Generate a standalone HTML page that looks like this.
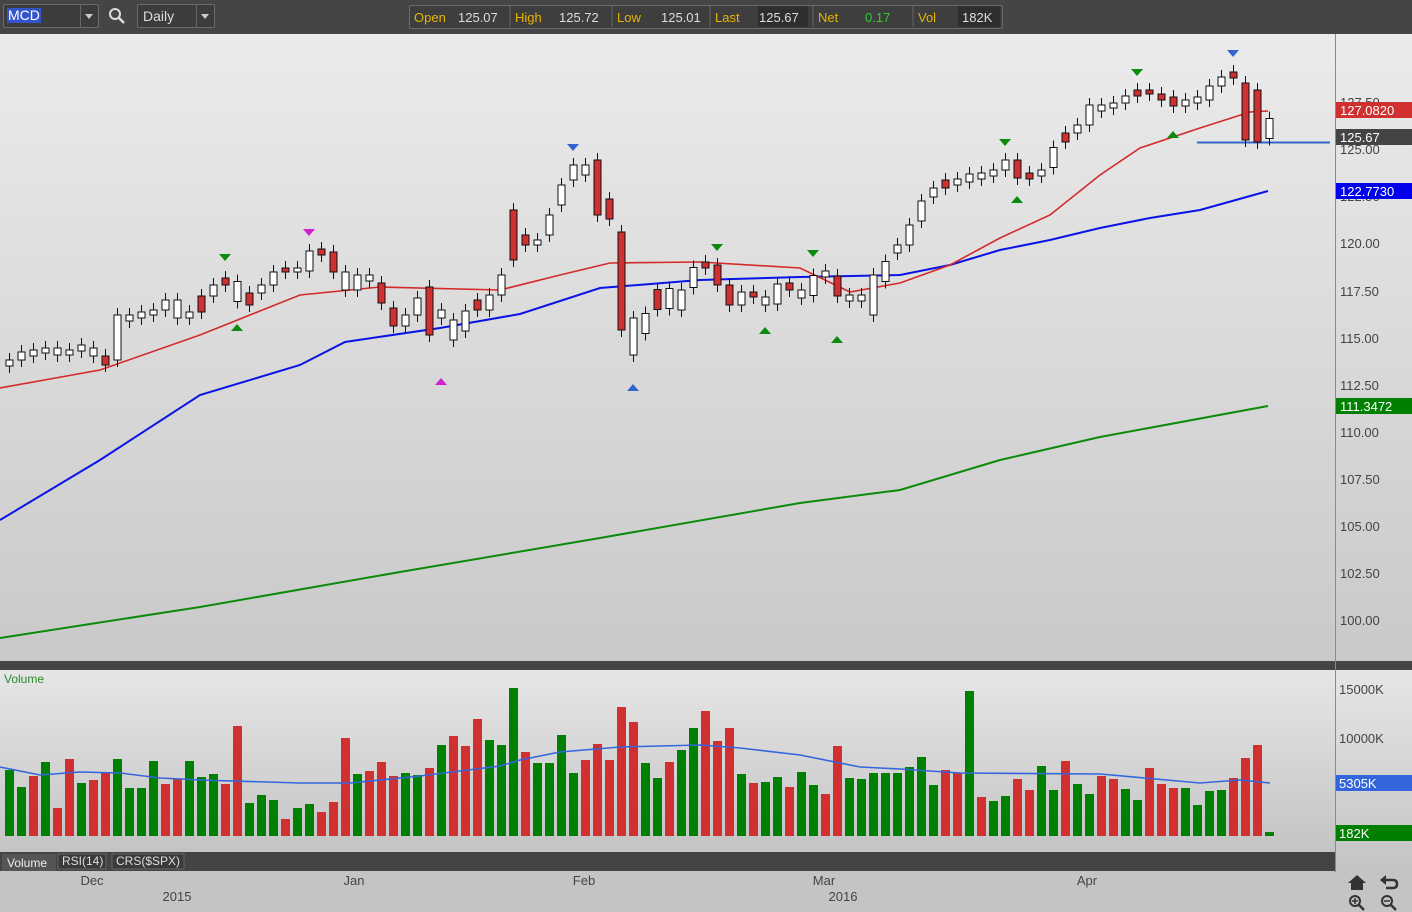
<!DOCTYPE html>
<html><head><meta charset="utf-8"><style>
html,body{margin:0;padding:0;width:1412px;height:912px;overflow:hidden;font-family:"Liberation Sans",Arial,sans-serif;background:#c4c4c4}
#top{position:absolute;left:0;top:0;width:1412px;height:34px;background:#454545}
.box{position:absolute;border:1px solid #6a6a6a;border-radius:2px;color:#ddd;font-size:14px}
svg{position:absolute;left:0;top:0}
</style></head><body>
<div id="top">
<div class="box" style="left:3px;top:4px;width:94px;height:22px;background:#3c3c3c"><span style="position:absolute;left:3px;top:3px;background:#3355cc;color:#fff;padding:0 1px;line-height:15px">MCD</span><span style="position:absolute;left:76px;top:0;width:18px;height:22px;border-left:1px solid #666"></span><span style="position:absolute;left:81px;top:9px;border:4px solid transparent;border-top:5px solid #ccc"></span></div>
<svg style="left:108px;top:7px" width="18" height="18" viewBox="0 0 18 18"><circle cx="7" cy="7" r="5" fill="none" stroke="#ddd" stroke-width="2"/><line x1="10.5" y1="10.5" x2="16" y2="16" stroke="#ddd" stroke-width="2.5"/></svg>
<div class="box" style="left:137px;top:4px;width:76px;height:22px;background:#3c3c3c"><span style="position:absolute;left:5px;top:3px">Daily</span><span style="position:absolute;left:58px;top:0;width:18px;height:22px;border-left:1px solid #666"></span><span style="position:absolute;left:63px;top:9px;border:4px solid transparent;border-top:5px solid #ccc"></span></div>
<div class="box" style="left:409px;top:5px;width:592px;height:22px;background:#3e3e3e"></div>
</div>
<svg width="1412" height="912" id="s"></svg>
<script>
var S='';
function r(x,y,w,h,f,extra){S+='<rect x="'+x+'" y="'+y+'" width="'+w+'" height="'+h+'" fill="'+f+'" '+(extra||'')+'/>';}
function t(x,y,s,f,sz,anch){S+='<text x="'+x+'" y="'+y+'" fill="'+f+'" font-size="'+(sz||13)+'" font-family="Liberation Sans,Arial,sans-serif"'+(anch?' text-anchor="'+anch+'"':'')+'>'+s+'</text>';}
function pl(pts,c,w){S+='<polyline fill="none" stroke="'+c+'" stroke-width="'+w+'" points="'+pts.map(function(p){return p.join(',')}).join(' ')+'"/>';}
S+='<defs><linearGradient id="g1" x1="0" y1="0" x2="0" y2="1"><stop offset="0" stop-color="#ebebeb"/><stop offset="1" stop-color="#c9c9c9"/></linearGradient><linearGradient id="g2" x1="0" y1="0" x2="0" y2="1"><stop offset="0" stop-color="#e6e6e6"/><stop offset="1" stop-color="#c4c4c4"/></linearGradient></defs>';
// quote bar
var q=[["Open","125.07",411,"#ddd"],["High","125.72",512,"#ddd"],["Low","125.01",614,"#ddd"],["Last","125.67",712,"#ddd"],["Net","0.17",815,"#33cc33"],["Vol","182K",915,"#ddd"]];
r(758,6,50,21,"#2e2e2e");r(958,6,42,21,"#2e2e2e");
q.forEach(function(a,i){t(a[2]+3,22,a[0],"#e8b400",13);t(a[2]+(i==4?50:47),22,a[1],a[3],13);if(i>0)S+='<line x1="'+(a[2]-2)+'" y1="6" x2="'+(a[2]-2)+'" y2="27" stroke="#666"/>';});
// panels
r(0,34,1335,627,"url(#g1)");r(1336,34,76,627,"url(#g1)");
r(0,661,1412,9,"#444");
r(0,670,1335,182,"url(#g2)");r(1336,670,76,202,"url(#g2)");
r(0,852,1335,19,"#444");
r(0,871,1335,41,"#c4c4c4");
S+='<line x1="1335.5" y1="34" x2="1335.5" y2="872" stroke="#8a8a8a"/>';
// price labels
var pl_=[["127.50",102],["125.00",149],["122.50",196],["120.00",243],["117.50",291],["115.00",338],["112.50",385],["110.00",432],["107.50",479],["105.00",526],["102.50",573],["100.00",620]];
pl_.forEach(function(a){t(1340,a[1]+5,a[0],"#444",13);});
// MAs
pl([[0,520],[100,460],[200,395],[300,365],[345,342],[440,328],[520,314],[600,288],[700,280],[800,277],[900,275],[950,265],[1000,250],[1050,240],[1100,228],[1150,218],[1200,210],[1268,191]],"#0a14e6",2);
pl([[0,638],[200,607],[400,572],[600,538],[800,503],[900,490],[1000,460],[1100,437],[1268,406]],"#0c8a0c",2);
pl([[0,388],[100,370],[200,335],[300,295],[380,287],[500,290],[560,275],[610,263],[700,262],[800,268],[850,292],[900,283],[950,265],[1000,238],[1050,215],[1100,175],[1140,148],[1200,128],[1250,112],[1268,111]],"#d42a2a",1.6);
S+='<line x1="1197" y1="142.5" x2="1330" y2="142.5" stroke="#3366cc" stroke-width="2"/>';
// candles
var c=[360,352,353,348,355,350,348,356,365,318,318,315,310,300,318,312,296,285,278,305,293,285,272,268,272,250,252,272,290,275,278,308,326,315,298,310,318,342,300,310,295,275,235,245,240,210,180,165,175,190,228,280,335,312,287,310,290,265,265,285,305,292,297,305,283,290,298,273,274,298,298,298,290,253,245,225,197,188,180,182,174,176,170,160,178,176,173,142,133,125,105,108,103,96,90,94,97,106,103,100,86,77,75,110,115,142];
var red={8:1,16:1,18:1,20:1,23:1,26:1,27:1,31:1,32:1,35:1,39:1,42:1,43:1,49:1,50:1,51:1,54:1,58:1,59:1,60:1,62:1,65:1,69:1,78:1,84:1,85:1,88:1,94:1,95:1,96:1,97:1,102:1,103:1,104:1};
var big={9:[315,360],42:[210,260],49:[160,215],51:[232,330],52:[318,355],72:[275,315],103:[83,140],104:[90,142],35:[287,335]};
for(var i=0;i<c.length;i++){var x=9+12*i,a,b;
 if(big[i]){a=big[i][0];b=big[i][1];}else{var p=i?c[i-1]:c[i]+6;a=Math.min(p,c[i]);b=Math.max(p,c[i]);if(b-a<4){a=c[i]-3;b=c[i]+3;}if(b-a>20){var m=(a+b)/2;a=m-10;b=m+10;}}
 S+='<line x1="'+(x+0.5)+'" y1="'+(a-7)+'" x2="'+(x+0.5)+'" y2="'+(b+7)+'" stroke="#111"/>';
 r(x-3,a,7,b-a,red[i]?"#d03030":"#fff",'stroke="#111" stroke-width="1"');}
// markers
function tri(x,y,col,down){S+=down?'<polygon points="'+(x-6)+','+(y-4)+' '+(x+6)+','+(y-4)+' '+x+','+(y+3)+'" fill="'+col+'"/>':'<polygon points="'+(x-6)+','+(y+4)+' '+(x+6)+','+(y+4)+' '+x+','+(y-3)+'" fill="'+col+'"/>';}
[[225,258],[717,248],[813,254],[1005,143],[1137,73]].forEach(function(p){tri(p[0],p[1],"#0c8a0c",1)});
[[237,327],[765,330],[837,339],[1017,199],[1173,134]].forEach(function(p){tri(p[0],p[1],"#0c8a0c",0)});
tri(309,233,"#d020d0",1);tri(441,381,"#d020d0",0);tri(573,148,"#3366cc",1);tri(1233,54,"#3366cc",1);tri(633,387,"#3366cc",0);
// tags
function tag(y,txt,col){r(1336,y,76,16,col);t(1340,y+13,txt,"#fff",13);}
tag(102,"127.0820","#d03030");tag(129,"125.67","#444");tag(183,"122.7730","#0000ee");tag(398,"111.3472","#008000");
// volume
var v=[770,787,776,762,808,759,783,780,772,759,788,788,761,784,779,761,777,774,784,726,803,795,800,819,808,804,812,802,738,774,771,762,776,773,775,768,745,736,746,719,740,745,688,752,763,763,735,773,760,744,760,707,722,763,778,762,750,728,711,741,728,774,783,782,777,787,772,785,794,746,778,779,773,773,773,767,757,785,770,773,691,797,801,796,779,790,766,790,761,784,794,776,779,789,800,768,784,788,788,805,791,790,778,758,745,832];
var vr={2:1,4:1,5:1,7:1,8:1,13:1,14:1,18:1,19:1,23:1,26:1,27:1,28:1,30:1,31:1,32:1,35:1,37:1,38:1,39:1,43:1,48:1,49:1,50:1,51:1,52:1,55:1,58:1,59:1,60:1,62:1,65:1,68:1,69:1,78:1,79:1,81:1,84:1,85:1,88:1,91:1,92:1,95:1,96:1,97:1,102:1,103:1,104:1};
for(var i=0;i<v.length;i++){r(5+12*i,v[i],9,836-v[i],vr[i]?"#d03030":"#008000");}
pl([[0,767],[30,773],[40,775],[80,772],[120,773],[160,778],[200,780],[300,783],[350,783],[420,776],[500,766],[520,760],[560,752],[620,747],[700,745],[740,748],[800,755],[860,767],[900,769],[960,773],[1100,774],[1200,783],[1240,780],[1270,783]],"#3366dd",1.6);
t(4,683,"Volume","#2a8a2a",12);
t(1339,694,"15000K","#444",13);t(1339,743,"10000K","#444",13);
r(1336,775,76,16,"#3366dd");t(1339,788,"5305K","#fff",13);
r(1336,825,76,16,"#008000");t(1339,838,"182K","#fff",13);
// tabs
r(2,854,54,17,"#555");t(7,867,"Volume","#eee",12);
r(58,854,48,15,"#3a3a3a",'stroke="#666"');t(62,865,"RSI(14)","#ddd",12);
r(112,854,72,15,"#3a3a3a",'stroke="#666"');t(116,865,"CRS($SPX)","#ddd",12);
// dates
[["Dec",92,885],["2015",177,901],["Jan",354,885],["Feb",584,885],["Mar",824,885],["2016",843,901],["Apr",1087,885]].forEach(function(a){t(a[1],a[2],a[0],"#444",13,"middle");});
// icons
S+='<polygon points="1357,875 1348,883 1351,883 1351,890 1363,890 1363,883 1366,883" fill="#333"/>';
S+='<path d="M1384,880 L1393,880 Q1397,880 1397,884 Q1397,888 1393,888 L1386,888" fill="none" stroke="#333" stroke-width="2.5"/><polygon points="1380,880 1386,875 1386,885" fill="#333"/>';
S+='<circle cx="1355" cy="901" r="5" fill="none" stroke="#333" stroke-width="2"/><line x1="1359" y1="905" x2="1364" y2="910" stroke="#333" stroke-width="2.5"/><line x1="1352" y1="901" x2="1358" y2="901" stroke="#333" stroke-width="1.5"/><line x1="1355" y1="898" x2="1355" y2="904" stroke="#333" stroke-width="1.5"/>';
S+='<circle cx="1387" cy="901" r="5" fill="none" stroke="#333" stroke-width="2"/><line x1="1391" y1="905" x2="1396" y2="910" stroke="#333" stroke-width="2.5"/><line x1="1384" y1="901" x2="1390" y2="901" stroke="#333" stroke-width="1.5"/>';
var sv=document.getElementById('s');sv.innerHTML=S;
</script>
</body></html>
